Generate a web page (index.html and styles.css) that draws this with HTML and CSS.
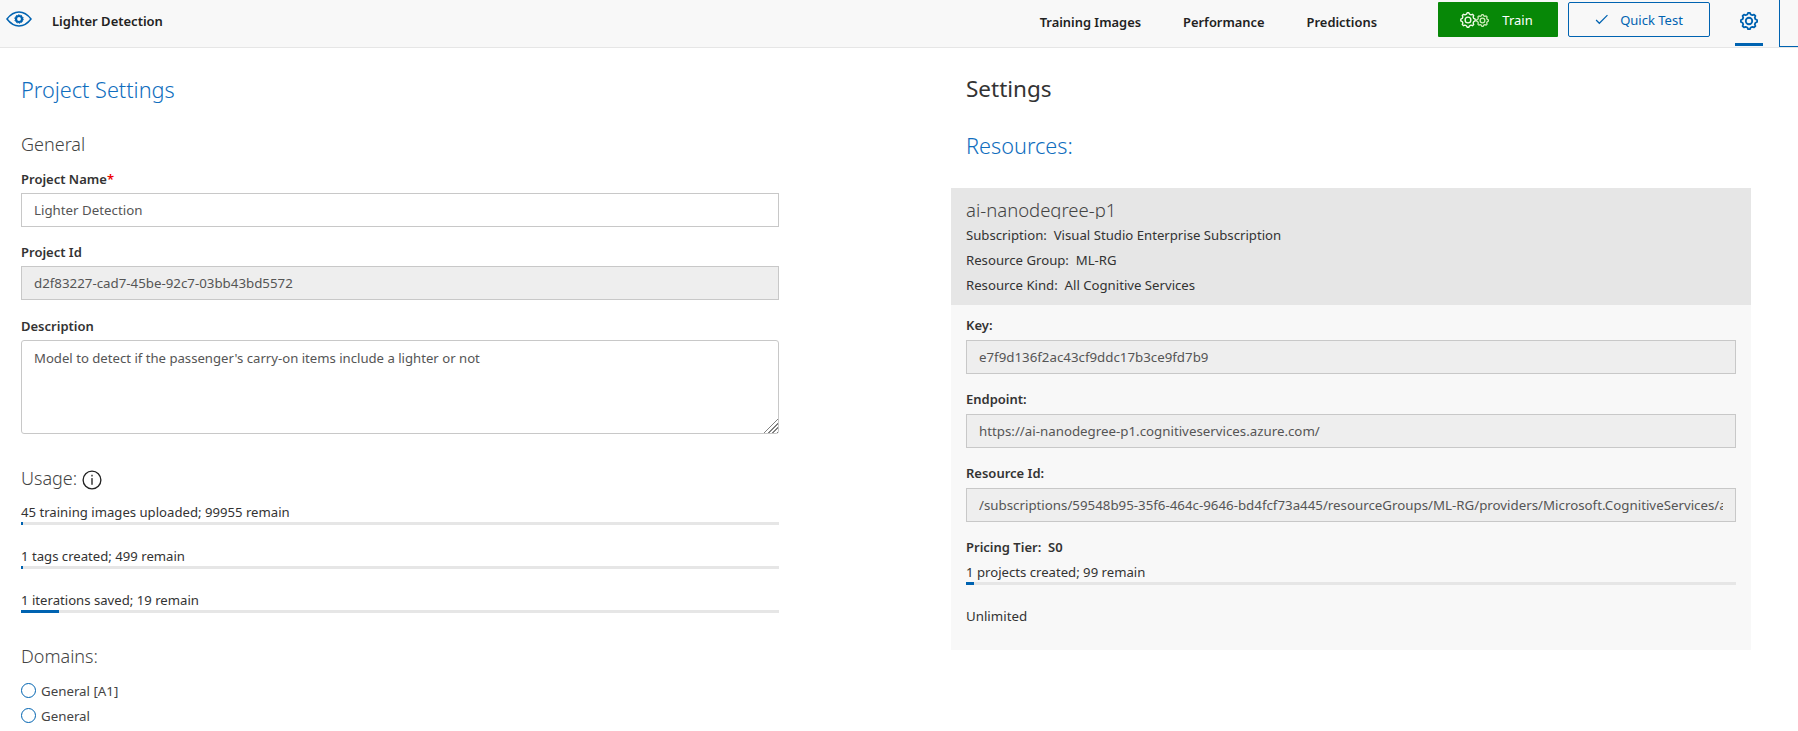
FILE: index.html
```html
<!DOCTYPE html>
<html lang="en">
<head>
<meta charset="utf-8">
<title>Lighter Detection - Project Settings</title>
<link rel="stylesheet" href="styles.css">
</head>
<body>
<svg class="defs" width="0" height="0" aria-hidden="true">
  <symbol id="gear" viewBox="0 0 20 20">
    <polygon points="8.1,2.8 8.9,1 11.1,1 11.9,2.8 13.75,3.57 15.59,2.86 17.14,4.41 16.43,6.25 17.2,8.1 19,8.9 19,11.1 17.2,11.9 16.43,13.75 17.14,15.59 15.59,17.14 13.75,16.43 11.9,17.2 11.1,19 8.9,19 8.1,17.2 6.25,16.43 4.41,17.14 2.86,15.59 3.57,13.75 2.8,11.9 1,11.1 1,8.9 2.8,8.1 3.57,6.25 2.86,4.41 4.41,2.86 6.25,3.57" fill="none" stroke="currentColor" stroke-width="var(--gear-stroke, 1.4)" stroke-linejoin="round"/>
    <circle cx="10" cy="10" r="3.6" fill="none" stroke="currentColor" stroke-width="var(--gear-stroke, 1.4)"/>
  </symbol>
</svg>
<header class="topbar">
  <svg class="eye" viewBox="0 0 26 16">
    <path d="M1 8C4.5 3.4 8.5 1 13 1s8.500 2.400 12 7c-3.500 4.600-7.500 7-12 7S4.500 12.600 1 8z" fill="none" stroke="currentColor" stroke-width="1.500"/>
    <circle cx="13" cy="8" r="3" fill="none" stroke="currentColor" stroke-width="2.200"/>
    <circle cx="13" cy="8" r="4.300" fill="none" stroke="currentColor" stroke-width="1" stroke-dasharray="1.300 1.400"/>
  </svg>
  <div class="project-title">Lighter Detection</div>
  <nav class="nav">
    <a class="nav-link">Training Images</a>
    <a class="nav-link">Performance</a>
    <a class="nav-link">Predictions</a>
  </nav>
  <button class="btn btn-train">
    <svg class="train-gear-a"><use href="#gear"/></svg><svg class="train-gear-b"><use href="#gear"/></svg>
    <span class="btn-label">Train</span>
  </button>
  <button class="btn btn-quick">
    <svg class="check" viewBox="0 0 12 10"><path d="M1 5.500l3 3L11.500 1" fill="none" stroke="currentColor" stroke-width="1.100"/></svg>
    <span class="btn-label">Quick Test</span>
  </button>
  <div class="settings-tab"><svg class="settings-gear"><use href="#gear"/></svg></div>
  <div class="corner-box"></div>
</header>
<main class="page">
  <section class="col-left">
    <h1 class="title-blue">Project Settings</h1>
    <h2 class="subhead subhead-first">General</h2>
    <div class="label label-first">Project Name<span class="req">*</span></div>
    <div class="field field-white"><span class="field-text">Lighter Detection</span></div>
    <div class="label">Project Id</div>
    <div class="field"><span class="field-text">d2f83227-cad7-45be-92c7-03bb43bd5572</span></div>
    <div class="label label-desc">Description</div>
    <textarea class="desc" readonly>Model to detect if the passenger's carry-on items include a lighter or not</textarea>
    <h2 class="subhead subhead-usage">Usage:<svg class="info" viewBox="0 0 18 18"><circle cx="9" cy="9" r="8" fill="none" stroke="currentColor" stroke-width="1.200"/><rect x="8.400" y="4.300" width="1.200" height="1.500" fill="currentColor"/><rect x="8.400" y="7.300" width="1.200" height="6" fill="currentColor"/></svg></h2>
    <div class="usage usage-first">
      <div class="usage-text">45 training images uploaded; 99955 remain</div>
      <div class="bar"><div class="bar-fill" style="width:2px"></div></div>
    </div>
    <div class="usage">
      <div class="usage-text">1 tags created; 499 remain</div>
      <div class="bar"><div class="bar-fill" style="width:2px"></div></div>
    </div>
    <div class="usage">
      <div class="usage-text">1 iterations saved; 19 remain</div>
      <div class="bar"><div class="bar-fill" style="width:5%"></div></div>
    </div>
    <h2 class="subhead subhead-domains">Domains:</h2>
    <div class="radio-list">
      <div class="radio"><span class="radio-dot"></span>General [A1]</div>
      <div class="radio"><span class="radio-dot"></span>General</div>
    </div>
  </section>
  <section class="col-right">
    <h1 class="title-dark">Settings</h1>
    <h2 class="title-blue title-resources">Resources:</h2>
    <div class="resource">
      <div class="resource-head">
        <div class="resource-name">ai-nanodegree-p1</div>
        <div class="resource-line">Subscription:&nbsp; Visual Studio Enterprise Subscription</div>
        <div class="resource-line">Resource Group:&nbsp; ML-RG</div>
        <div class="resource-line">Resource Kind:&nbsp; All Cognitive Services</div>
      </div>
      <div class="resource-body">
        <div class="label">Key:</div>
        <div class="field"><span class="field-text">e7f9d136f2ac43cf9ddc17b3ce9fd7b9</span></div>
        <div class="label">Endpoint:</div>
        <div class="field"><span class="field-text">https://ai-nanodegree-p1.cognitiveservices.azure.com/</span></div>
        <div class="label">Resource Id:</div>
        <div class="field"><span class="field-text">/subscriptions/59548b95-35f6-464c-9646-bd4fcf73a445/resourceGroups/ML-RG/providers/Microsoft.CognitiveServices/a</span></div>
        <div class="label">Pricing Tier:&nbsp; S0</div>
        <div class="usage usage-plan">
          <div class="usage-text">1 projects created; 99 remain</div>
          <div class="bar"><div class="bar-fill" style="width:1%"></div></div>
        </div>
        <div class="unlimited">Unlimited</div>
      </div>
    </div>
  </section>
</main>
</body>
</html>
```
FILE: styles.css
```css
* { box-sizing: border-box; }
html, body { margin: 0; padding: 0; height: 100%; overflow: hidden; }
body {
  font-family: "Noto Sans", "Open Sans", "Liberation Sans", sans-serif;
  font-size: 13.3px;
  color: #333;
  background: #fff;
}
.defs { position: absolute; }

/* top bar */
.topbar {
  display: flex;
  align-items: flex-start;
  height: 48px;
  background: #f8f8f8;
  border-bottom: 1px solid #e6e6e6;
  color: #0063b1;
}
.eye { width: 26px; height: 16px; margin: 11px 0 0 6px; }
.project-title {
  margin: 11px 0 0 20px;
  line-height: 20px;
  font-size: 13px;
  font-weight: 600;
  color: #222;
}
.nav { display: flex; gap: 42px; margin: 12px 61px 0 auto; }
.nav-link { line-height: 20px; font-size: 12.900px; font-weight: 600; color: #222; }
.btn {
  display: flex;
  align-items: center;
  justify-content: center;
  height: 35px;
  margin-top: 2px;
  padding: 0;
  font: inherit;
  font-size: 13px;
  border-radius: 1px;
}
.btn-train { width: 120px; border: 0; background: #078807; color: #fff; }
.btn-quick { width: 142px; margin-left: 10px; border: 1px solid #0063b1; border-radius: 2px; background: #fff0; color: #0063b1; }
.train-gear-a { width: 16px; height: 16px; color: #f2fae9; --gear-stroke: 1.700; }
.train-gear-b { width: 13px; height: 13px; margin-top: 2px; color: #cdeab8; --gear-stroke: 2; }
.btn-train .btn-label { margin-left: 13px; margin-right: 3px; }
.btn-quick .btn-label { margin-left: 12px; }
.check { width: 13px; height: 11px; }
.settings-tab {
  display: flex;
  justify-content: center;
  width: 28px;
  height: 46px;
  margin-left: 25px;
  padding-top: 12px;
  border-bottom: 3px solid #0063b1;
}
.settings-gear { width: 18px; height: 18px; --gear-stroke: 2; }
.corner-box {
  width: 19px;
  height: 47px;
  margin-left: 16px;
  border-left: 1px solid #0063b1;
  border-bottom: 1px solid #0063b1;
}

/* page */
.page { display: flex; align-items: flex-start; }
.col-left { width: 758px; margin-left: 21px; }
.col-right { width: 800px; margin-left: 172px; }
h1, h2 { margin: 0; font-weight: 300; }
.title-blue, .title-dark { font-size: 21.700px; line-height: 32px; margin-top: 26px; }
.title-blue { color: #106ebe; }
.title-dark { color: #333; font-size: 22.500px; font-weight: 400; padding-left: 15px; margin-top: 25px; }
.title-resources { padding-left: 15px; margin-top: 25px; }
.subhead { font-size: 18px; line-height: 28px; color: #444; }
.subhead-first { margin-top: 24px; }
.subhead-usage { display: flex; align-items: center; margin-top: 30px; }
.subhead-domains { margin-top: 29px; }
.info { width: 20px; height: 20px; margin: 3px 0 0 5px; color: #222; }

.label { margin-top: 15px; line-height: 20px; font-size: 13px; font-weight: 600; color: #333; }
.label-first { margin-top: 11px; }
.label-desc { margin-top: 16px; }
.req { color: #e00; }
.field {
  height: 34px;
  margin-top: 4px;
  padding: 0 12px;
  display: flex;
  align-items: center;
  background: #eee;
  border: 1px solid #c8c8c8;
  color: #555;
}
.field-white { background: #fff; }
.field-text { display: block; width: 100%; overflow: hidden; white-space: nowrap; }
.desc {
  display: block;
  width: 100%;
  height: 94px;
  margin-top: 4px;
  padding: 8px 12px;
  font: inherit;
  font-size: 13.150px;
  color: #555;
  background: #fff;
  border: 1px solid #c8c8c8;
  border-radius: 3px;
  outline: 0;
}
.desc::-webkit-resizer {
  background:
    linear-gradient(135deg, #fff 50%, transparent 50%),
    repeating-linear-gradient(135deg, transparent 0 1.800px, #808080 1.800px 3px);
}
.usage { margin-top: 21px; }
.usage-first { margin-top: 10px; }
.usage-text { line-height: 20px; font-size: 13.150px; color: #333; }
.bar { height: 3px; background: #e6e6e6; }
.bar-fill { height: 100%; background: #0063b1; }
.radio-list { margin-top: 8px; }
.radio { display: flex; align-items: center; height: 25px; color: #444; }
.radio-dot {
  width: 15px;
  height: 15px;
  margin-right: 5px;
  border: 1.500px solid #0063b1;
  border-radius: 50%;
}

/* resource card */
.resource { margin-top: 26px; background: #f8f8f8; }
.resource-head { padding: 8px 15px 7px; background: #e6e6e6; }
.resource-name {
  height: 23px;
  margin-bottom: 4px;
  overflow: hidden;
  font-size: 18.500px;
  font-weight: 300;
  line-height: 27px;
  color: #444;
}
.resource-line { line-height: 25px; font-size: 13.180px; color: #333; }
.resource-body { padding: 10px 15px 24px; }
.resource-body .label:first-child { margin-top: 0; }
.resource-body .field { margin-top: 5px; }
.usage-plan { margin-top: 5px; }
.unlimited { margin-top: 21px; line-height: 20px; color: #333; }
```
